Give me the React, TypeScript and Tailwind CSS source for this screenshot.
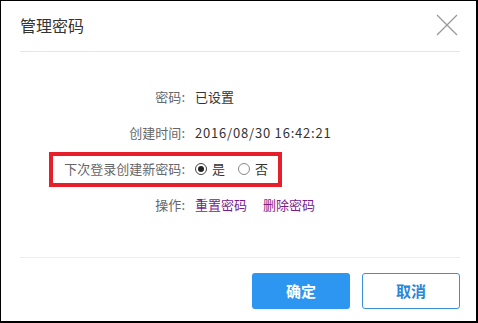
import React from "react";

const font = { fontFamily: '"Noto Sans CJK SC", "Noto Sans", sans-serif' };

function Radio({ checked }: { checked: boolean }) {
  return (
    <span
      className={
        "inline-flex h-[12px] w-[12px] items-center justify-center rounded-full border " +
        (checked ? "border-[#444]" : "border-[#888]")
      }
    >
      {checked && <span className="h-[6px] w-[6px] rounded-full bg-[#222]" />}
    </span>
  );
}

function Row({ label, children }: { label: string; children: React.ReactNode }) {
  return (
    <div className="flex h-9 items-center text-[13px]">
      <div className="w-[184px] text-right text-[#666]">{label}:</div>
      <div className="ml-[10px] flex items-center text-[#333]">{children}</div>
    </div>
  );
}

export default function App() {
  return (
    <div
      className="flex h-[323px] w-[478px] flex-col border-t border-l border-r-2 border-b-2 border-black bg-white"
      style={font}
    >
      <div className="ml-[19px] mr-4 flex h-[51px] items-center justify-between border-b border-[#e6e6e6] pb-[3px]">
        <span className="text-[16px] text-[#333]">管理密码</span>
        <svg width="22" height="22" viewBox="0 0 22 22" className="mr-[2px] mt-[1px]">
          <path d="M1 1 L21 21 M21 1 L1 21" stroke="#9a9a9a" strokeWidth="1.3" fill="none" />
        </svg>
      </div>

      <div className="flex-1 pt-[27px]">
        <Row label="密码">已设置</Row>
        <Row label="创建时间">
          <span className="tracking-[0.8px]">2016/08/30 16:42:21</span>
        </Row>
        <div className="relative">
          <Row label="下次登录创建新密码">
            <span className="flex items-center gap-[5px]">
              <Radio checked />
              <span>是</span>
            </span>
            <span className="ml-[13px] flex items-center gap-[5px]">
              <Radio checked={false} />
              <span>否</span>
            </span>
          </Row>
          <div className="pointer-events-none absolute left-[48px] top-[1px] h-[35px] w-[233px] border-4 border-[#e61f2a]" />
        </div>
        <Row label="操作">
          <a className="text-[#7c1b8c]">重置密码</a>
          <a className="ml-4 text-[#7c1b8c]">删除密码</a>
        </Row>
      </div>

      <div className="ml-[19px] mr-4 flex justify-end gap-3 border-t border-[#eeeeee] pt-[15px] pb-[12px]">
        <button className="h-9 w-[98px] rounded-[3px] bg-[#2d96f0] text-[15px] font-bold text-white">
          确定
        </button>
        <button className="h-9 w-[98px] rounded-[3px] border border-[#3a8fdc] bg-white text-[15px] font-bold text-[#2a86d8]">
          取消
        </button>
      </div>
    </div>
  );
}
